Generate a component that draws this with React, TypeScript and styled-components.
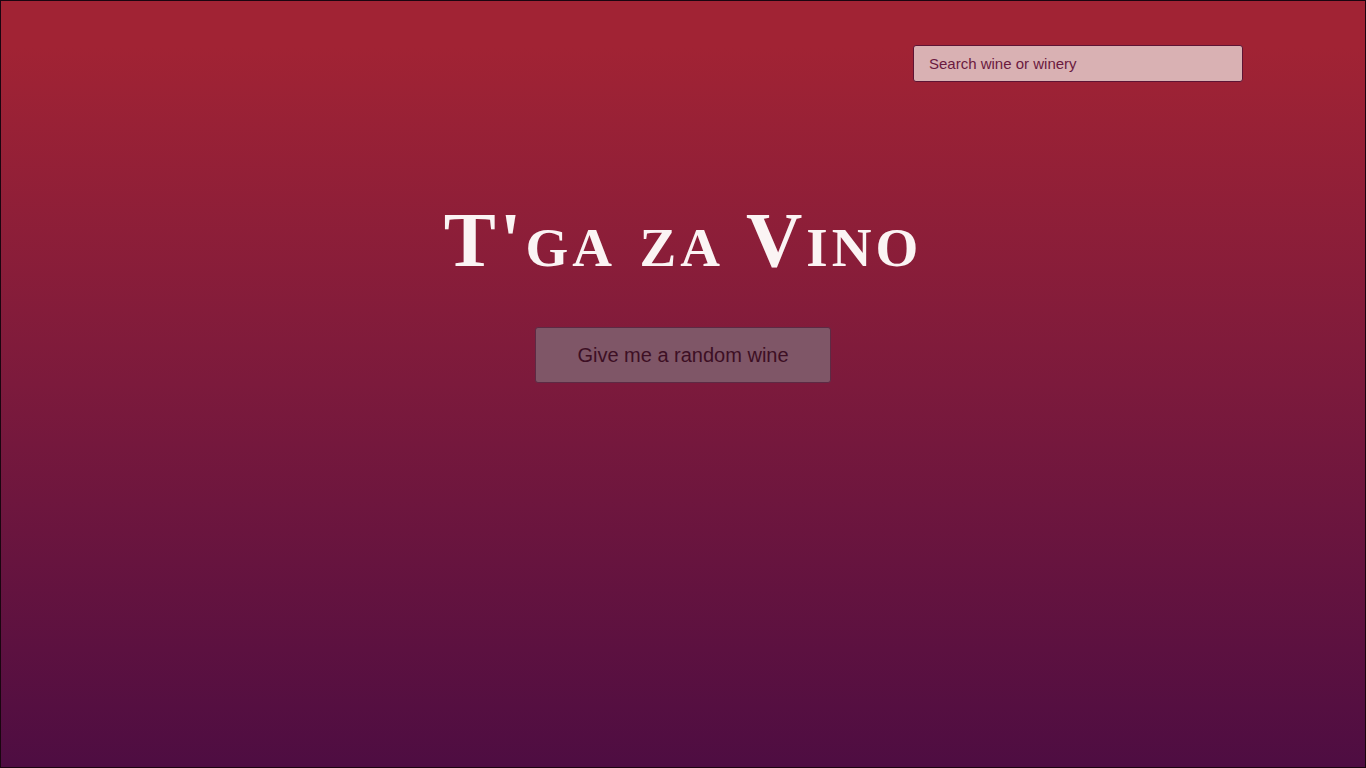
import React from "react";
import styled, { createGlobalStyle } from "styled-components";

const GlobalStyle = createGlobalStyle`
  html, body { margin: 0; padding: 0; height: 100%; }
  body { font-family: "Liberation Sans", Arial, sans-serif; }
  #root { height: 100%; }
`;

const Page = styled.div`
  box-sizing: border-box;
  width: 100%;
  height: 768px;
  border: 1px solid #1a0510;
  background: linear-gradient(to bottom, #a12334 0%, #a12334 6%, #7c1a3c 50%, #4e0d42 100%);
  display: flex;
  flex-direction: column;
`;

const TopBar = styled.div`
  display: flex;
  justify-content: flex-end;
  padding: 44px 122px 0 0;
`;

const SearchInput = styled.input`
  box-sizing: border-box;
  width: 330px;
  height: 37px;
  padding: 0 15px;
  border: 1px solid #5e1434;
  border-radius: 3px;
  background: #d9b1b3;
  color: #6b1a3f;
  font-family: "Liberation Sans", Arial, sans-serif;
  font-size: 15px;
  outline: none;
  &::placeholder { color: #6b1a3f; opacity: 1; }
`;

const Hero = styled.main`
  display: flex;
  flex-direction: column;
  align-items: center;
  padding-top: 108px;
`;

const Title = styled.h1`
  margin: 0;
  font-family: "Liberation Serif", "DejaVu Serif", serif;
  font-weight: 700;
  font-variant: small-caps;
  font-size: 78px;
  line-height: 100px;
  letter-spacing: 4px;
  color: #fbf4f4;
`;

const RandomButton = styled.button`
  box-sizing: border-box;
  margin-top: 37px;
  width: 296px;
  height: 56px;
  border: 1px solid #5d2a44;
  border-radius: 3px;
  background: #7f5667;
  color: #3d0f24;
  font-family: "Liberation Sans", Arial, sans-serif;
  font-size: 20px;
  cursor: pointer;
`;

export default function App() {
  return (
    <>
      <GlobalStyle />
      <Page>
        <TopBar>
          <SearchInput placeholder="Search wine or winery" />
        </TopBar>
        <Hero>
          <Title>T'ga za Vino</Title>
          <RandomButton>Give me a random wine</RandomButton>
        </Hero>
      </Page>
    </>
  );
}
